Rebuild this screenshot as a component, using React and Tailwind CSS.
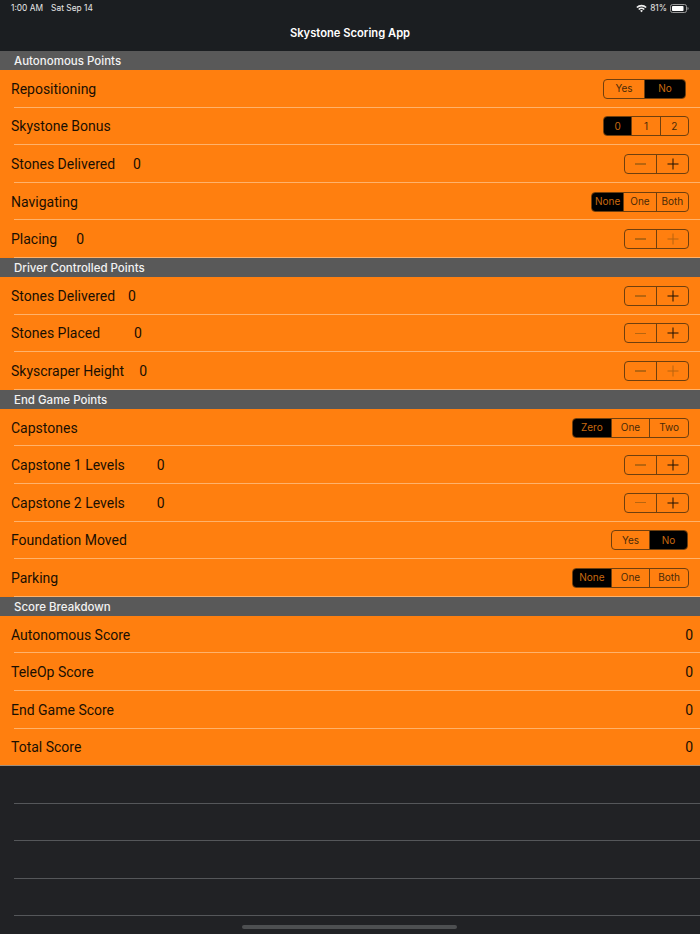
const orange = 'bg-[#ff7f0f]'

function Segmented({ items, selected, className }) {
  return (
    <div className={`flex h-[20px] rounded-[4px] border border-[#6f3f0e] overflow-hidden text-[10px] ${className}`}>
      {items.map((item, i) => (
        <div
          key={item}
          className={`flex flex-1 items-center justify-center ${i > 0 ? 'border-l border-[#6f3f0e]' : ''} ${
            i === selected ? 'bg-black text-[#c9690f]' : 'text-[#4a2a08]'
          }`}
        >
          {item}
        </div>
      ))}
    </div>
  )
}

function Stepper({ plusOn }) {
  return (
    <div className="flex h-[20px] w-[65px] rounded-[4px] border border-[#6f3f0e]">
      <div className="flex flex-1 items-center justify-center">
        <div className="h-[1.5px] w-[11px] bg-[#b8650f]" />
      </div>
      <div className="flex flex-1 items-center justify-center border-l border-[#6f3f0e]">
        <svg width="12" height="12" viewBox="0 0 12 12">
          <path d="M6 0.5V11.5M0.5 6H11.5" stroke={plusOn ? '#1a1005' : '#b8650f'} strokeWidth="1" fill="none" />
        </svg>
      </div>
    </div>
  )
}

function Row({ label, value, valueClass, children, last }) {
  return (
    <div className={`flex h-[37.6px] items-center justify-between ${orange} relative`}>
      <div className="flex items-center pl-[11px] pt-[1px] font-['Roboto',sans-serif] text-[14px] text-[#1a0f02]">
        <span>{label}</span>
        {value !== undefined && <span className={valueClass}>{value}</span>}
      </div>
      {children}
      <div className={`absolute bottom-0 right-0 h-[1px] ${last ? 'left-0 bg-[#a08f7c]' : 'left-[14px] bg-[#ffb26b]'}`} />
    </div>
  )
}

function Section({ title }) {
  return (
    <div className="flex h-[19px] items-center bg-[#595959] pl-[14px] pt-[2px] text-[11.5px] font-medium text-[#f2f2f2]">
      {title}
    </div>
  )
}

function Control({ children, right }) {
  return <div className={right}>{children}</div>
}

export default function App() {
  return (
    <div className="flex h-[934px] w-[700px] flex-col overflow-hidden bg-[#212225] font-['Inter',sans-serif]">
      <div className="h-[51px] bg-[#1b1e21] px-[11px] text-white">
        <div className="flex h-[17px] items-center justify-between text-[8.4px] text-[#e6e6e6]">
          <div className="flex gap-[8px]">
            <span>1:00 AM</span>
            <span>Sat Sep 14</span>
          </div>
          <div className="flex items-center gap-[3px]">
            <svg width="11" height="9" viewBox="0 0 11 9">
              <path d="M0.3 3A7.4 7.4 0 0 1 10.7 3L9.6 4.1A5.9 5.9 0 0 0 1.4 4.1Z" fill="#f0f0f0" />
              <path d="M2.2 4.9A4.7 4.7 0 0 1 8.8 4.9L7.7 6A3.2 3.2 0 0 0 3.3 6Z" fill="#f0f0f0" />
              <path d="M4.1 6.8A2 2 0 0 1 6.9 6.8L5.5 8.3Z" fill="#f0f0f0" />
            </svg>
            <span>81%</span>
            <svg width="19" height="9" viewBox="0 0 19 9">
              <rect x="0.5" y="0.5" width="16" height="8" rx="2" fill="none" stroke="#9a9a9a" />
              <rect x="2" y="2" width="11.5" height="5" rx="0.8" fill="#ffffff" />
              <path d="M17.5 3V6C18.2 5.8 18.6 5.2 18.6 4.5S18.2 3.2 17.5 3Z" fill="#9a9a9a" />
            </svg>
          </div>
        </div>
        <div className="flex h-[34px] items-center justify-center pb-[2px] text-[11.2px] font-semibold">
          Skystone Scoring App
        </div>
      </div>

      <Section title="Autonomous Points" />
      <Row label="Repositioning">
        <Control right="pr-[14px]">
          <Segmented items={['Yes', 'No']} selected={1} className="w-[83px]" />
        </Control>
      </Row>
      <Row label="Skystone Bonus">
        <Control right="pr-[11px]">
          <Segmented items={['0', '1', '2']} selected={0} className="w-[86px]" />
        </Control>
      </Row>
      <Row label="Stones Delivered" value="0" valueClass="ml-[18px]">
        <Control right="pr-[11px]">
          <Stepper plusOn />
        </Control>
      </Row>
      <Row label="Navigating">
        <Control right="pr-[11px]">
          <Segmented items={['None', 'One', 'Both']} selected={0} className="w-[98px]" />
        </Control>
      </Row>
      <Row label="Placing" value="0" valueClass="ml-[19px]">
        <Control right="pr-[11px]">
          <Stepper />
        </Control>
      </Row>

      <Section title="Driver Controlled Points" />
      <Row label="Stones Delivered" value="0" valueClass="ml-[13px]">
        <Control right="pr-[11px]">
          <Stepper plusOn />
        </Control>
      </Row>
      <Row label="Stones Placed" value="0" valueClass="ml-[34px]">
        <Control right="pr-[11px]">
          <Stepper plusOn />
        </Control>
      </Row>
      <Row label="Skyscraper Height" value="0" valueClass="ml-[15px]">
        <Control right="pr-[11px]">
          <Stepper />
        </Control>
      </Row>

      <Section title="End Game Points" />
      <Row label="Capstones">
        <Control right="pr-[11px]">
          <Segmented items={['Zero', 'One', 'Two']} selected={0} className="w-[117px]" />
        </Control>
      </Row>
      <Row label="Capstone 1 Levels" value="0" valueClass="ml-[32px]">
        <Control right="pr-[11px]">
          <Stepper plusOn />
        </Control>
      </Row>
      <Row label="Capstone 2 Levels" value="0" valueClass="ml-[32px]">
        <Control right="pr-[11px]">
          <Stepper plusOn />
        </Control>
      </Row>
      <Row label="Foundation Moved">
        <Control right="pr-[12px]">
          <Segmented items={['Yes', 'No']} selected={1} className="w-[77px]" />
        </Control>
      </Row>
      <Row label="Parking">
        <Control right="pr-[11px]">
          <Segmented items={['None', 'One', 'Both']} selected={0} className="w-[117px]" />
        </Control>
      </Row>

      <Section title="Score Breakdown" />
      {['Autonomous Score', 'TeleOp Score', 'End Game Score', 'Total Score'].map((label, i) => (
        <Row key={label} label={label} last={i === 3}>
          <span className="pr-[7px] pt-[1px] font-['Roboto',sans-serif] text-[14px] text-[#1a0f02]">0</span>
        </Row>
      ))}

      <div className="relative flex-1">
        <div className="ml-[14px] h-[37.5px] border-b border-[#55575a]" />
        <div className="ml-[14px] h-[37.5px] border-b border-[#55575a]" />
        <div className="ml-[14px] h-[37.5px] border-b border-[#55575a]" />
        <div className="ml-[14px] h-[37.5px] border-b border-[#55575a]" />
        <div className="absolute bottom-[5px] left-[242px] h-[4px] w-[215px] rounded-full bg-[#4d4f51]" />
      </div>
    </div>
  )
}
